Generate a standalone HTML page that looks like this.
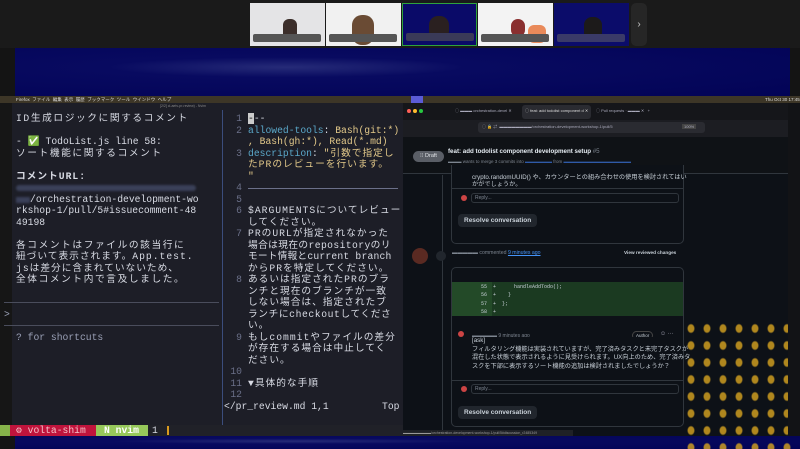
<!DOCTYPE html>
<html><head><meta charset="utf-8"><style>
*{margin:0;padding:0;box-sizing:border-box}
body{width:800px;height:449px;overflow:hidden;background:#141414;position:relative;font-family:"Liberation Sans","Noto Sans CJK JP",sans-serif}
.a{position:absolute;white-space:nowrap}
.m{font-family:"Liberation Mono","Noto Sans CJK JP",monospace;font-size:9.7px;color:#d8dbe4;line-height:11.5px}
.j{letter-spacing:1.6px}
.k{letter-spacing:1px}
.navy{background:radial-gradient(ellipse at 35% 40%,#262b78 0%,#080a60 25%,#020356 100%)}
.th{position:absolute;top:3px;width:75px;height:43px;overflow:hidden}
.lbl{position:absolute;left:3px;bottom:4px;width:68px;height:8px;background:#555;border-radius:2px}
.ln{color:#6b7089;width:16px;text-align:right;left:226px}
.cy{color:#5aa7c8}
.yl{color:#e3c98a}
.g{color:#9aa0b6}
.box{position:absolute;border:1px solid #30363d;border-radius:5px;background:#0d1117}
.btn{position:absolute;background:#21262d;border-radius:4px;color:#c9d1d9;font-size:6.5px;font-weight:bold;padding:3px 6px}
.sm{font-size:6px;color:#aab}
.jp{font-size:6.2px;color:#c9d1d9;line-height:8.7px}
</style></head><body>
<div class="a" style="left:0;top:0;width:800px;height:48px;background:#1a1a1a"></div>
<div class="th" style="left:250px;background:#e4e4e6"><div class="a" style="left:33px;top:16px;width:14px;height:22px;background:#3b2e2a;border-radius:6px"></div><div class="lbl"></div></div>
<div class="th" style="left:326px;background:#f1f1f1"><div class="a" style="left:26px;top:12px;width:22px;height:30px;background:#6a4b34;border-radius:10px"></div><div class="lbl"></div></div>
<div class="th" style="left:402px;background:#0a0a68;border:1px solid #2fa33c"><div class="a" style="left:26px;top:12px;width:20px;height:24px;background:#2a2020;border-radius:9px"></div><div class="lbl" style="background:#3a3a58"></div></div>
<div class="th" style="left:478px;background:#f3f3f3"><div class="a" style="left:33px;top:16px;width:14px;height:18px;background:#8a3030;border-radius:7px"></div><div class="a" style="left:50px;top:22px;width:18px;height:18px;background:#e98a5a;border-radius:6px"></div><div class="lbl"></div></div>
<div class="th" style="left:554px;background:#0b0c6a"><div class="a" style="left:30px;top:14px;width:18px;height:24px;background:#1c1a1a;border-radius:8px"></div><div class="lbl" style="background:#3a3a68"></div></div>
<div class="a" style="left:631px;top:3px;width:16px;height:43px;background:#262626;border-radius:5px;color:#ccc;font-size:10px;text-align:center;line-height:43px">›</div>
<div class="a navy" style="left:15px;top:48px;width:775px;height:48px"></div>
<div class="a navy" style="left:15px;top:436px;width:785px;height:13px"></div>
<div class="a" style="left:0;top:96px;width:800px;height:7px;background:#3d3627"></div>
<div class="a" style="left:16px;top:96px;font-size:4.5px;color:#ddd;line-height:7px">Firefox&nbsp;&nbsp;ファイル&nbsp;&nbsp;編集&nbsp;&nbsp;表示&nbsp;&nbsp;履歴&nbsp;&nbsp;ブックマーク&nbsp;&nbsp;ツール&nbsp;&nbsp;ウインドウ&nbsp;&nbsp;ヘルプ</div>
<div class="a" style="left:411px;top:96px;width:12px;height:7px;background:#5b5bd6"></div>
<div class="a" style="left:765px;top:96px;font-size:4.5px;color:#ddd;line-height:7px">Thu Oct 30 17:45</div>
<!-- terminal -->
<div class="a" style="left:0;top:103px;width:403px;height:322px;background:#1d1e27"></div>
<div class="a" style="left:0;top:103px;width:12px;height:333px;background:#161616"></div>
<div class="a" style="left:160px;top:104px;font-size:3.5px;color:#888">[2/2] cl-aetv-pr-review) - Nvim</div>
<div class="a" style="left:222px;top:110px;width:1px;height:315px;background:#3b4d7c"></div>
<div class="a m j" style="left:16px;top:113px">ID生成ロジックに関するコメント</div>
<div class="a m" style="left:16px;top:136px">- ✅ TodoList.js line 58:</div>
<div class="a m j" style="left:16px;top:147.5px">ソート機能に関するコメント</div>
<div class="a m k" style="left:16px;top:170.5px;font-weight:bold">コメントURL:</div>
<div class="a" style="left:16px;top:185px;width:180px;height:6px;background:#3a4058;border-radius:3px;filter:blur(1px)"></div>
<div class="a" style="left:16px;top:197px;width:14px;height:6px;background:#3a4058;filter:blur(1px)"></div>
<div class="a m" style="left:30px;top:193.5px">/orchestration-development-wo</div>
<div class="a m" style="left:16px;top:205px">rkshop-1/pull/5#issuecomment-48</div>
<div class="a m" style="left:16px;top:216.5px">49198</div>
<div class="a m j" style="left:16px;top:239.5px">各コメントはファイルの該当行に</div>
<div class="a m k" style="left:16px;top:251px">紐づいて表示されます。App.test.</div>
<div class="a m k" style="left:16px;top:262.5px">jsは差分に含まれていないため、</div>
<div class="a m j" style="left:16px;top:274px">全体コメント内で言及しました。</div>
<div class="a" style="left:4px;top:302px;width:215px;height:1px;background:#4a4d5c"></div>
<div class="a m g" style="left:4px;top:309px">&gt;</div>
<div class="a" style="left:4px;top:325px;width:215px;height:1px;background:#4a4d5c"></div>
<div class="a m g" style="left:16px;top:332px">? for shortcuts</div>
<!-- nvim -->
<div class="a m ln" style="top:113px">1</div><div class="a m" style="left:248px;top:113px"><span style="background:#ccc;color:#111">-</span>--</div>
<div class="a m ln" style="top:124.5px">2</div><div class="a m" style="left:248px;top:124.5px"><span class="cy">allowed-tools</span>: <span class="yl">Bash(git:*)</span></div>
<div class="a m yl" style="left:248px;top:136px">, Bash(gh:*), Read(*.md)</div>
<div class="a m ln" style="top:147.5px">3</div><div class="a m" style="left:248px;top:147.5px"><span class="cy">description</span>: <span class="yl k">"引数で指定し</span></div>
<div class="a m yl k" style="left:248px;top:159px">たPRのレビューを行います。</div>
<div class="a m yl" style="left:248px;top:170.5px">"</div>
<div class="a m ln" style="top:182px">4</div><div class="a" style="left:248px;top:188px;width:150px;height:1px;background:#6b7089"></div>
<div class="a m ln" style="top:193.5px">5</div>
<div class="a m ln" style="top:205px">6</div><div class="a m k" style="left:248px;top:205px">$ARGUMENTSについてレビュー</div>
<div class="a m k" style="left:248px;top:216.5px">してください。</div>
<div class="a m ln" style="top:228px">7</div><div class="a m k" style="left:248px;top:228px">PRのURLが指定されなかった</div>
<div class="a m" style="left:248px;top:239.5px;letter-spacing:.4px">場合は現在のrepositoryのリ</div>
<div class="a m" style="left:248px;top:251px;letter-spacing:.2px">モート情報とcurrent branch</div>
<div class="a m k" style="left:248px;top:262.5px">からPRを特定してください。</div>
<div class="a m ln" style="top:274px">8</div><div class="a m k" style="left:248px;top:274px">あるいは指定されたPRのブラ</div>
<div class="a m k" style="left:248px;top:285.5px">ンチと現在のブランチが一致</div>
<div class="a m k" style="left:248px;top:297px">しない場合は、指定されたブ</div>
<div class="a m" style="left:248px;top:308.5px;letter-spacing:.6px">ランチにcheckoutしてくださ</div>
<div class="a m k" style="left:248px;top:320px">い。</div>
<div class="a m ln" style="top:331.5px">9</div><div class="a m k" style="left:248px;top:331.5px">もしcommitやファイルの差分</div>
<div class="a m k" style="left:248px;top:343px">が存在する場合は中止してく</div>
<div class="a m k" style="left:248px;top:354.5px">ださい。</div>
<div class="a m ln" style="top:366px">10</div>
<div class="a m ln" style="top:377.5px">11</div><div class="a m k" style="left:248px;top:377.5px">▼具体的な手順</div>
<div class="a m ln" style="top:389px">12</div>
<div class="a m" style="left:224px;top:400.5px">&lt;/pr_review.md 1,1</div>
<div class="a m" style="left:382px;top:400.5px">Top</div>
<div class="a" style="left:0;top:425px;width:403px;height:11px;background:#202128"></div>
<div class="a" style="left:0;top:425px;width:10px;height:11px;background:#86b34a"></div>
<div class="a m" style="left:10px;top:425px;width:86px;height:11px;background:#c0143c;color:#f3c0c8;padding-left:6px;line-height:11px">⚙ volta-shim</div>
<div class="a m" style="left:96px;top:425px;width:52px;height:11px;background:#96c85a;color:#fff;padding-left:8px;line-height:11px;font-weight:bold">N nvim</div>
<div class="a m" style="left:152px;top:425px;line-height:11px">1</div>
<div class="a" style="left:167px;top:426px;width:2px;height:9px;background:#d89a20"></div>
<!-- browser -->
<div class="a" style="left:403px;top:103px;width:385px;height:333px;background:#0d1117"></div>
<div class="a" style="left:403px;top:103px;width:385px;height:17px;background:#15161a"></div>
<div class="a" style="left:407px;top:109px;width:4px;height:4px;border-radius:2px;background:#ff5f57"></div>
<div class="a" style="left:413px;top:109px;width:4px;height:4px;border-radius:2px;background:#febc2e"></div>
<div class="a" style="left:419px;top:109px;width:4px;height:4px;border-radius:2px;background:#28c840"></div>
<div class="a sm" style="left:455px;top:108px;font-size:4px">◯ ▬▬▬ orchestration-devel ✕</div>
<div class="a" style="left:522px;top:105px;width:69px;height:14px;background:#2a2b31;border-radius:3px"></div>
<div class="a sm" style="left:525px;top:108px;font-size:4px;color:#ddd">◯ feat: add todolist component d ✕</div>
<div class="a sm" style="left:596px;top:108px;font-size:4px">◯ Pull requests · ▬▬▬ ✕ &nbsp;&nbsp;+</div>
<div class="a" style="left:403px;top:120px;width:385px;height:17px;background:#1c1d22"></div>
<div class="a" style="left:478px;top:122px;width:227px;height:11px;background:#2a2b31;border-radius:3px"></div>
<div class="a sm" style="left:482px;top:124px;font-size:4px">◯ 🔒 ⇄ &nbsp;▬▬▬▬▬▬▬▬/orchestration-development-workshop-1/pull/5</div>
<div class="a sm" style="left:682px;top:124px;font-size:4px;background:#444;padding:0 2px">100%</div>
<div class="a" style="left:403px;top:137px;width:385px;height:37px;background:#0f1216;border-bottom:1px solid #30363d"></div>
<div class="a" style="left:413px;top:151px;width:31px;height:11px;background:#5a5e66;border-radius:6px;color:#dfe2e6;font-size:5.5px;text-align:center;line-height:11px">⁝⁝ Draft</div>
<div class="a" style="left:448px;top:148px;font-size:6.2px;font-weight:bold;color:#e6edf3">feat: add todolist component development setup <span style="color:#7d8590;font-weight:normal">#5</span></div>
<div class="a" style="left:448px;top:159px;font-size:4.5px;color:#7d8590">▬▬▬ wants to merge 3 commits into <span style="color:#2f5aa8">▬▬▬▬▬▬</span> from <span style="color:#2f5aa8">▬▬▬▬▬▬▬▬▬▬▬▬▬▬▬</span></div>
<div class="a" style="left:442px;top:175px;width:1px;height:260px;background:#30363d"></div>
<div class="box" style="left:451px;top:165px;width:233px;height:79px;border-top:none;border-radius:0 0 5px 5px"></div>
<div class="a jp" style="left:472px;top:174px">crypto.randomUUID() や、カウンターとの組み合わせの使用を検討されてはい</div>
<div class="a jp" style="left:472px;top:181px">かがでしょうか。</div>
<div class="a" style="left:452px;top:188px;width:231px;height:1px;background:#30363d"></div>
<div class="a" style="left:471px;top:193px;width:208px;height:10px;border:1px solid #30363d;border-radius:3px;font-size:5px;color:#7d8590;padding-left:3px;line-height:8px">Reply...</div>
<div class="a" style="left:461px;top:195px;width:6px;height:6px;border-radius:3px;background:#c44"></div>
<div class="btn" style="left:458px;top:214px">Resolve conversation</div>
<div class="a" style="left:412px;top:248px;width:16px;height:16px;border-radius:8px;background:#5a2a22"></div>
<div class="a" style="left:436px;top:251px;width:10px;height:10px;border-radius:5px;background:#21262d"></div>
<div class="a" style="left:452px;top:250px;font-size:5.2px;color:#7d8590">▬▬▬▬▬ commented <span style="color:#4493f8;text-decoration:underline">9 minutes ago</span></div>
<div class="a" style="left:624px;top:250px;font-size:4.7px;color:#c9d1d9;font-weight:bold">View reviewed changes</div>
<div class="box" style="left:451px;top:267px;width:233px;height:70px;border-radius:5px 5px 0 0;border-bottom:none"></div>
<div class="a" style="left:452px;top:282px;width:231px;height:34px;background:#1b3a21"></div>
<div class="a" style="left:452px;top:282px;width:40px;height:34px;background:#234a28"></div>
<div class="a" style="left:481px;top:283px;font-family:'Liberation Mono',monospace;font-size:5px;line-height:8.3px;color:#c9d1d9;white-space:pre">55  +      handleAddTodo();
56  +    }
57  +  };
58  +</div>
<div class="a" style="left:458px;top:331px;width:6px;height:6px;border-radius:3px;background:#c44"></div>
<div class="a" style="left:472px;top:333px;font-size:5px;color:#7d8590">▬▬▬▬▬ 9 minutes ago</div>
<div class="a" style="left:632px;top:331px;font-size:4.5px;color:#c9d1d9;border:1px solid #444;border-radius:5px;padding:1px 3px">Author</div>
<div class="a sm" style="left:660px;top:331px">☺ ···</div>
<div class="box" style="left:451px;top:337px;width:233px;height:90px;border-top:none;border-radius:0 0 5px 5px"></div>
<div class="a jp" style="left:472px;top:337px">[ask]</div>
<div class="a jp" style="left:472px;top:345.5px">フィルタリング機能は実装されていますが、完了済みタスクと未完了タスクが</div>
<div class="a jp" style="left:472px;top:354px">混在した状態で表示されるように見受けられます。UX向上のため、完了済みタ</div>
<div class="a jp" style="left:472px;top:362.5px">スクを下部に表示するソート機能の追加は検討されましたでしょうか？</div>
<div class="a" style="left:452px;top:380px;width:231px;height:1px;background:#30363d"></div>
<div class="a" style="left:471px;top:384px;width:208px;height:10px;border:1px solid #30363d;border-radius:3px;font-size:5px;color:#7d8590;padding-left:3px;line-height:8px">Reply...</div>
<div class="a" style="left:461px;top:386px;width:6px;height:6px;border-radius:3px;background:#c44"></div>
<div class="btn" style="left:458px;top:406px">Resolve conversation</div>
<div class="a" style="left:403px;top:430px;width:170px;height:6px;background:#1f2126;font-size:3.5px;color:#999;line-height:6px">▬▬▬▬▬▬▬▬/orchestration-development-workshop-1/pull/5#discussion_r2485349</div>
<div class="a" style="left:683px;top:320px;width:110px;height:129px;background:radial-gradient(ellipse 4px 5px,#d9a520 70%,transparent 100%) 0 0/16px 17px;opacity:.8"></div>
<div class="a" style="left:788px;top:103px;width:12px;height:333px;background:#121316"></div>
</body></html>
